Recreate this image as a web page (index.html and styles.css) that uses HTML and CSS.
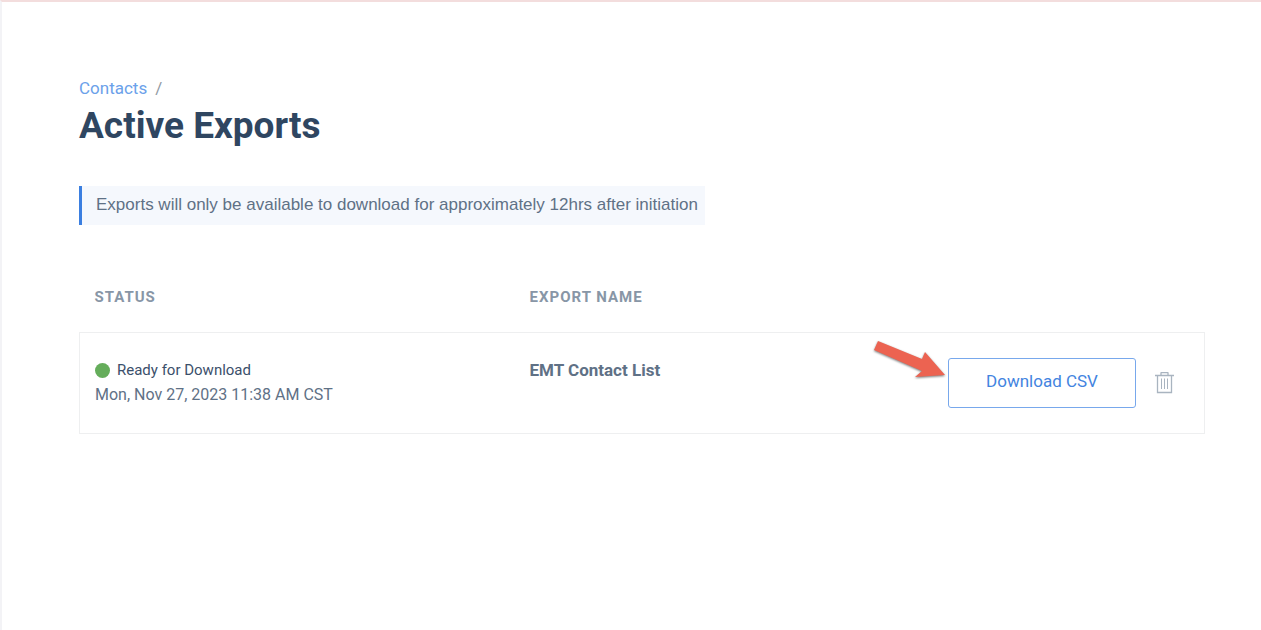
FILE: index.html
```html
<!DOCTYPE html>
<html lang="en">
<head>
<meta charset="utf-8">
<meta name="viewport" content="width=device-width, initial-scale=1">
<title>Active Exports</title>
<link rel="stylesheet" href="styles.css">
</head>
<body>
<main class="page">
  <nav class="breadcrumb" aria-label="Breadcrumb">
    <a class="breadcrumb-link" href="#contacts">Contacts</a>
    <span class="breadcrumb-separator">/</span>
  </nav>
  <h1 class="title">Active Exports</h1>
  <p class="notice">Exports will only be available to download for approximately 12hrs after initiation</p>
  <table class="exports">
    <thead>
      <tr>
        <th class="heading status-column" scope="col">Status</th>
        <th class="heading" scope="col">Export Name</th>
        <td></td>
      </tr>
    </thead>
    <tbody>
      <tr class="export">
        <td class="cell">
          <div class="state"><span class="dot"></span>Ready for Download</div>
          <div class="date">Mon, Nov 27, 2023 11:38 AM CST</div>
        </td>
        <td class="cell name">EMT Contact List</td>
        <td class="cell actions-cell">
          <div class="actions">
            <svg class="arrow" width="76" height="46" viewBox="0 0 76 46" aria-hidden="true">
              <path d="M5 2 49 20 52 13 72 36 42 38 49 32 1 11Z" fill="#ec6351"/>
            </svg>
            <button class="download" type="button">Download CSV</button>
            <button class="delete" type="button" aria-label="Delete export">
              <svg width="20" height="22" viewBox="0 0 20 22" fill="none" stroke="#a9b4c0" aria-hidden="true">
                <path d="M0 3.5H19M2.5 3.5V20.5H16.5V3.5M6 3V1Q6 .5 6.5 .5H12.5Q13 .5 13 1V3" stroke-width="1.3"/>
                <path d="M6.5 6.5V17M9.5 6.5V17M12.5 6.5V17"/>
              </svg>
            </button>
          </div>
        </td>
      </tr>
    </tbody>
  </table>
</main>
</body>
</html>
```
FILE: styles.css
```css
* {
  box-sizing: border-box;
}

body {
  margin: 0;
  background: #fff;
  color: #5f7186;
  font: 17px/24px Roboto, "Liberation Sans", sans-serif;
}

.page {
  min-height: 100vh;
  padding: 74px 56px 0 77px;
  border-top: 2px solid #f3dddd;
  border-left: 2px solid #f3f3f6;
}

.breadcrumb {
  display: flex;
  gap: 8px;
}

.breadcrumb-link {
  color: #6ba1ea;
  text-decoration: none;
}

.breadcrumb-separator {
  color: #929aa3;
}

.title {
  margin: 0 0 35px;
  color: #2f4661;
  font-size: 37px;
  line-height: 51px;
  font-weight: 700;
}

.notice {
  width: fit-content;
  margin: 0;
  padding: 7px 7px 8px 14px;
  border-left: 3px solid #3b7fe0;
  background: #f5f8fd;
  font-family: "Liberation Sans", sans-serif;
}

.exports {
  width: 100%;
  margin-top: 55px;
  border-collapse: collapse;
  table-layout: fixed;
}

.status-column {
  width: 435px;
}

.heading {
  padding: 5px 15px 23px;
  color: #8896a6;
  font-size: 15px;
  font-weight: 700;
  letter-spacing: 1px;
  text-align: left;
  text-transform: uppercase;
}

.export {
  border: 1px solid #eeeff0;
}

.cell {
  padding: 25px 15px;
  vertical-align: top;
}

.name {
  font-weight: 700;
}

.state {
  display: flex;
  align-items: center;
  gap: 7px;
  color: #3b506b;
  font-size: 15px;
}

.date {
  font-size: 16px;
  line-height: 26px;
}

.dot {
  width: 15px;
  height: 15px;
  border-radius: 50%;
  background: #65ad5b;
}

.actions-cell {
  padding-right: 29px;
}

.actions {
  position: relative;
  display: flex;
  justify-content: flex-end;
  align-items: center;
  gap: 19px;
}

.download {
  width: 188px;
  height: 50px;
  padding: 0 0 4px;
  border: 1px solid #78a8ec;
  border-radius: 3px;
  background: #fff;
  color: #4384df;
  font: inherit;
}

.delete {
  display: flex;
  padding: 0;
  border: 0;
  background: none;
}

.arrow {
  position: absolute;
  top: -19px;
  right: 226px;
  filter: drop-shadow(0 1px 1px #0008);
}
```
